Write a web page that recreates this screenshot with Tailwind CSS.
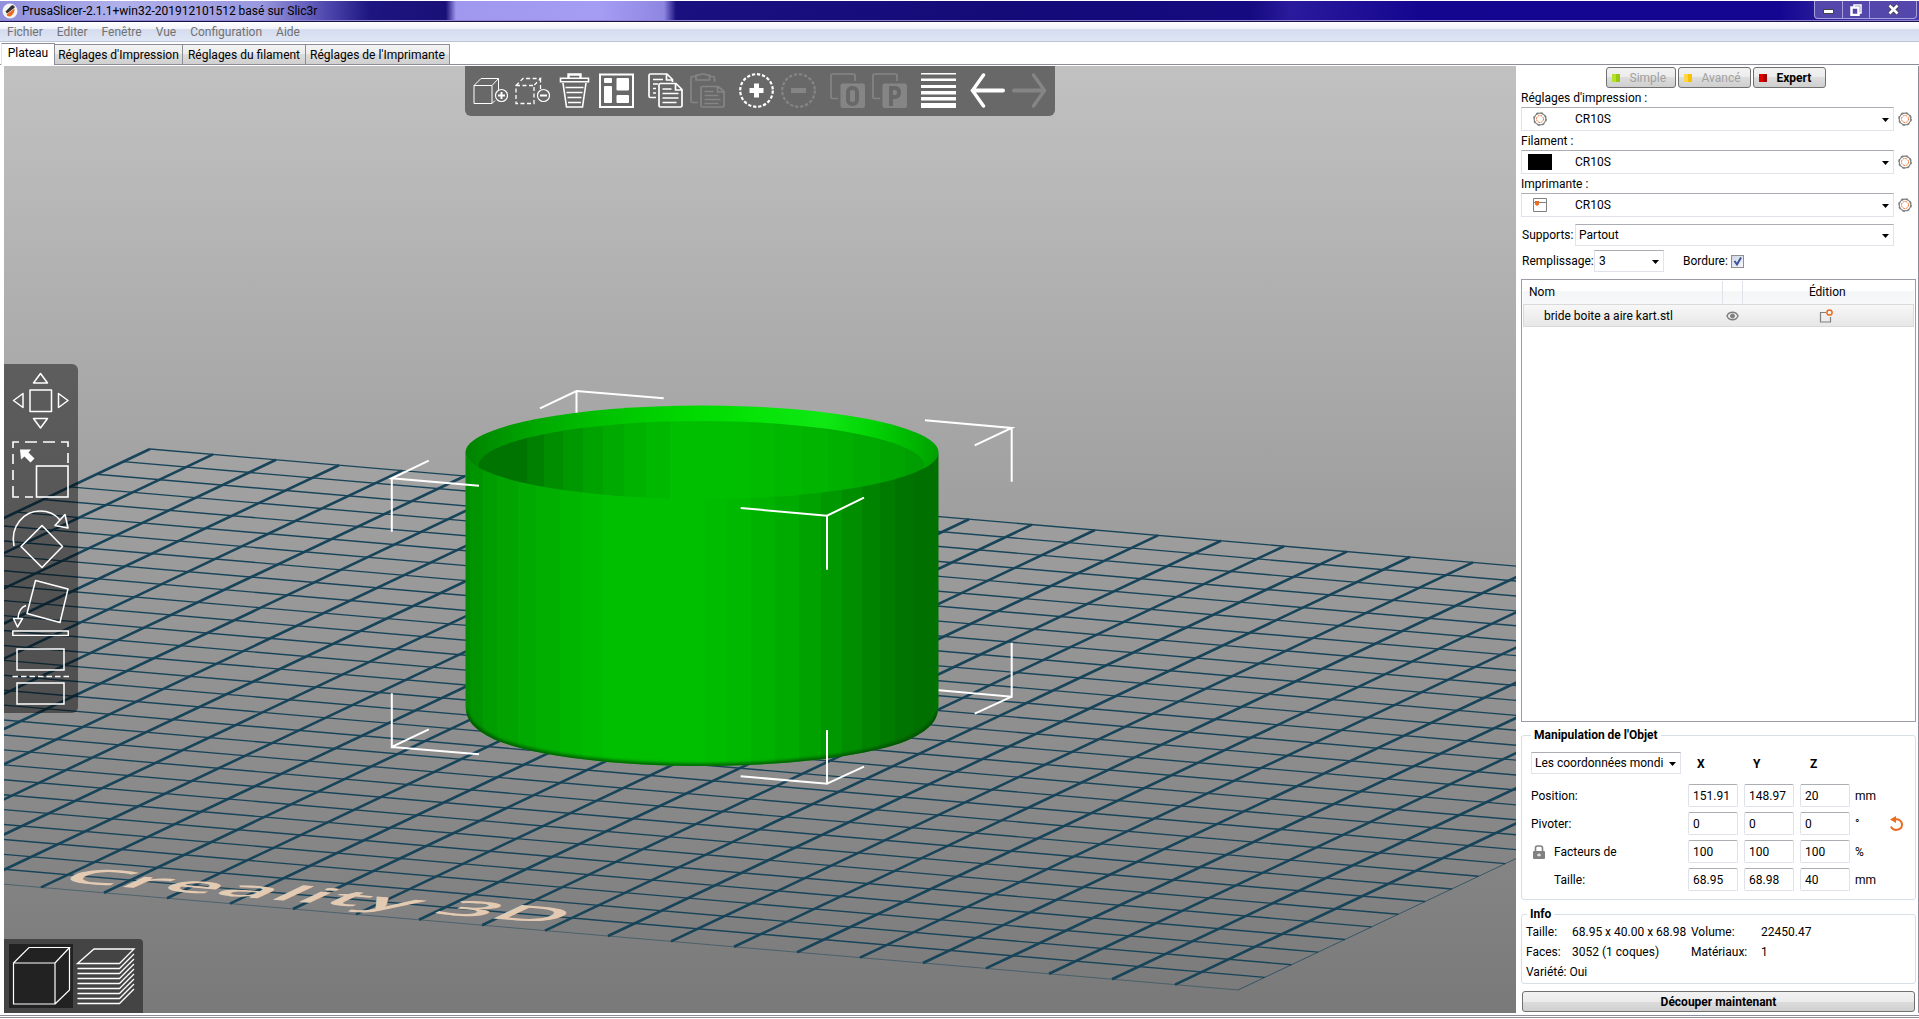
<!DOCTYPE html>
<html lang="fr">
<head>
<meta charset="utf-8">
<title>PrusaSlicer</title>
<script src="https://cdn.jsdelivr.net/npm/@tailwindcss/browser@4"></script>
</head>
<body class="flex min-h-screen flex-col bg-white font-['Roboto','Noto_Sans',sans-serif] text-[12px] leading-4 text-black">

<!-- Title bar -->
<header class="mt-px flex h-[21px] items-stretch border-b border-[#1a1048] inset-shadow-[0_-1px_#8c84d0] bg-[linear-gradient(90deg,#8f8fdc_0px,#b0b0ea_120px,#9a98de_260px,#4a44ab_330px,#1d1580_370px,#1a1078_446px,#a098ee_456px,#a59df4_600px,#8e86e0_664px,#1a1080_676px,#140a78_1000px,#150a80_1250px,#2a1a9c_1290px,#150690_1420px,#140690_1780px,#4a3cae_1880px)]">
  <div class="flex flex-1 items-center gap-1 pl-[2px]">
    <svg class="size-4" viewBox="0 0 16 16"><circle cx="8" cy="8" r="7.500" fill="#f4f4f4"/><path d="M3.500 8.500 9.500 2.500c1.500-.5 3 .5 3.300 2L5 10.500z" fill="#333"/><path d="m4.500 11.500 8-6c.5 3-2 7.500-5 8-1.500 0-2.600-.8-3-2z" fill="#ed6b21"/></svg>
    <h1 class="text-[12px]">PrusaSlicer-2.1.1+win32-201912101512 basé sur Slic3r</h1>
  </div>
  <div class="mr-[2px] flex h-[18px] overflow-hidden rounded-b border border-t-0 border-[#a8a0dd] bg-[#5347ac]">
    <button class="flex w-[28px] items-center justify-center border-r border-[#a8a0dd]" aria-label="Réduire"><svg class="mt-1 h-[5px] w-[11px]"><rect x=".5" y=".5" width="10" height="4" fill="#fff" stroke="#444"/></svg></button>
    <button class="flex w-[27px] items-center justify-center border-r border-[#a8a0dd]" aria-label="Restaurer"><svg class="size-3" viewBox="0 0 12 12" fill="none" stroke="#fff" stroke-width="1.500"><path d="M4 3V1h7v8H9"/><path d="M1.500 3.500h7v7.500h-7z" stroke-width="2.500"/></svg></button>
    <button class="flex w-[46px] items-center justify-center" aria-label="Fermer"><svg class="size-[11px]" viewBox="0 0 11 11"><path d="m1.500 1.500 8 8m0-8-8 8" stroke="#444" stroke-width="4"/><path d="m1.500 1.500 8 8m0-8-8 8" stroke="#fff" stroke-width="2.500"/></svg></button>
  </div>
</header>

<!-- Menu bar -->
<nav class="flex h-5 items-center gap-[14px] border-b border-[#bfc5d2] bg-[linear-gradient(#fff,#f0f3f9_35%,#d5dcee_40%,#dfe6f5)] pl-[7px] text-[#727272]">
  <a href="#">Fichier</a><a href="#">Editer</a><a href="#">Fenêtre</a><a href="#">Vue</a><a href="#">Configuration</a><a href="#">Aide</a>
</nav>

<!-- Tabs -->
<div class="flex h-[23px] items-end border-b border-[#8b8e98] pl-px">
  <button class="-mb-px h-[22px] w-[54px] border border-b-0 border-[#8b8e98] border-l-[#e4e4e8] bg-white pb-1">Plateau</button>
  <button class="h-[20px] w-[128px] border-t border-r border-[#8b8e98] bg-[linear-gradient(#f3f3f3,#ebebeb_50%,#dcdcdc_50%,#d0d0d0)]">Réglages d'Impression</button>
  <button class="h-[20px] w-[123px] border-t border-r border-[#8b8e98] bg-[linear-gradient(#f3f3f3,#ebebeb_50%,#dcdcdc_50%,#d0d0d0)]">Réglages du filament</button>
  <button class="h-[20px] w-[144px] border-t border-r border-[#8b8e98] bg-[linear-gradient(#f3f3f3,#ebebeb_50%,#dcdcdc_50%,#d0d0d0)]">Réglages de l'Imprimante</button>
</div>

<main class="flex flex-1 border-b border-[#8b8e98] pt-px pb-[2px] pl-1">

  <!-- 3D view -->
  <section class="relative min-w-0 flex-1 overflow-hidden bg-[linear-gradient(#c1c1c1,#797979)]">
    <svg class="absolute inset-0 size-full" aria-hidden="true">
      <defs>
        <linearGradient id="wall" gradientUnits="userSpaceOnUse" x1="465" x2="938" y1="0" y2="0"></linearGradient>
        <linearGradient id="inner" gradientUnits="userSpaceOnUse" x1="465" x2="938" y1="0" y2="0"></linearGradient>
        <linearGradient id="rim" gradientUnits="userSpaceOnUse" x1="465" x2="938" y1="0" y2="0">
          <stop offset="0" stop-color="#008200"/><stop offset=".06" stop-color="#009200"/><stop offset=".15" stop-color="#00a800"/><stop offset=".28" stop-color="#00c000"/><stop offset=".48" stop-color="#00da00"/><stop offset=".62" stop-color="#06e408"/><stop offset=".76" stop-color="#10e814"/><stop offset=".86" stop-color="#02d404"/><stop offset=".95" stop-color="#00b400"/><stop offset="1" stop-color="#00a000"/>
        </linearGradient>
        <clipPath id="mouth"><ellipse cx="702" cy="452.500" rx="236.500" ry="47"/></clipPath>
        <clipPath id="bodyClip"><path d="M465.500 452V706C466 722 476 731 498 741C540 757 620 766 702 766C784 766 864 757 906 741C928 731 938 722 938.500 706V452A236.500 47 0 0 1 465.500 452Z"/></clipPath>
        <filter id="soft" x="-5%" y="-20%" width="110%" height="140%"><feGaussianBlur stdDeviation="1.500"/></filter>
      </defs>
      <g transform="translate(-4 -66)">
        <g id="bed" fill="none" stroke="#174459"></g>
        <text transform="matrix(6.300 .54 -2.670 1.263 55 881)" font-size="15" font-weight="600" font-family="Open Sans, Noto Sans, sans-serif" fill="#e2cab3">Creality 3D</text>
        <path d="M576.500 391V414M540 408.300 576.500 391 663.700 398.300M1011.700 642.700V696.700L925 689M1011.700 696.700 974.700 713.700" fill="none" stroke="#fff" stroke-width="2"/>
        <ellipse cx="702" cy="452.500" rx="236.500" ry="47" fill="url(#rim)"/>
        <g clip-path="url(#mouth)"><ellipse cx="701.500" cy="466" rx="223" ry="45" fill="url(#inner)"/></g>
        <path d="M465.500 452V706C466 722 476 731 498 741C540 757 620 766 702 766C784 766 864 757 906 741C928 731 938 722 938.500 706V452A236.500 47 0 0 1 465.500 452Z" fill="url(#wall)"/>
        <g clip-path="url(#bodyClip)"><path d="M463 712C466 723 476 733 498 743C540 759 620 768 702 768C784 768 864 759 906 743C928 733 938 723 941 712" fill="none" stroke="#004a00" stroke-width="9" filter="url(#soft)" opacity=".75"/></g>
        <path d="M925 420.300 1011.700 428 974.700 445.300M1011.700 428V481.700M428.800 460.700 391.800 478.300 479 485.700M391.800 478.300V531.700M740.700 508 827 515.700 864 497.700M827 515.700V569.700M391.800 693.300V747L428.800 729.300M391.800 747 479 754.300M827 730V783.700L740.700 776.300M827 783.700 864 766.700" fill="none" stroke="#fff" stroke-width="2"/>
      </g>
    </svg>

    <!-- Top toolbar -->
    <div class="absolute top-0 left-[461px] flex h-[50px] gap-[14px] rounded-b-md bg-[#686868] px-2 pt-[7px]" role="toolbar">
      <div class="flex gap-[7px]">
        <button class="size-[35px]" aria-label="Ajouter"><svg viewBox="0 0 35 35" fill="none" stroke="#fff" stroke-linejoin="round"><path d="M1 12.500h18v18H1zM1 12.500l7-7h17.500l-6.500 7M25.500 5.500V17M19 30.500l3-3"/><circle cx="28.500" cy="22.500" r="6" stroke-width="1.200"/><path d="M28.500 19v7M25 22.500h7" stroke-width="2"/></svg></button>
        <button class="size-[35px]" aria-label="Supprimer"><svg viewBox="0 0 35 35" fill="none" stroke="#fff"><path d="M1 12.500h18v18H1zM1 12.500l7-7h17.500l-6.500 7M25.500 5.500V17" stroke-dasharray="4 2.500" stroke-width="1.300"/><circle cx="28.500" cy="22.500" r="6" fill="#686868" stroke-width="1.200"/><path d="M25 22.500h7" stroke-width="2"/></svg></button>
        <button class="size-[35px]" aria-label="Tout supprimer"><svg viewBox="0 0 35 35" fill="none" stroke="#fff" stroke-width="1.600"><path d="M11.500 5V1.500h12V5" stroke-width="2.400"/><path d="M3.500 5.200h28v3.600h-28z"/><path d="M6 10l3.500 24h16L29 10M8.500 14.500h18M9.500 19.500h16M10.500 24.500h14M11 29.500h13"/></svg></button>
        <button class="size-[35px]" aria-label="Agencer"><svg viewBox="0 0 35 35"><path d="M1 1.500h33v32.500H1z" fill="none" stroke="#fff" stroke-width="2"/><g fill="#fff"><rect x="5" y="5" width="8" height="5" rx="1"/><rect x="17.500" y="5" width="12.500" height="12.500" rx="1"/><rect x="5" y="13" width="8" height="17" rx="1"/><rect x="17.500" y="22" width="12.500" height="8" rx="1"/></g></svg></button>
      </div>
      <div class="flex gap-[7px]">
        <button class="size-[35px]" aria-label="Copier"><svg viewBox="0 0 35 35" fill="none" stroke="#fff" stroke-width="1.700" stroke-linejoin="round"><path d="M8 24.500H2.500q-1.500 0-1.500-1.500V2.500Q1 1 2.500 1H19l5.500 5.500V9M18.500 1v6h6M5 6.500h10M5 11h5M5 15.500h3M5 20h3"/><path d="M11 12q0-1.500 1.500-1.500H28l6 6V32.500q0 1.500-1.500 1.500h-20q-1.500 0-1.500-1.500zM27.500 10.500v6.500H34M14.500 16h9M14.500 20.500h16M14.500 25h16M14.500 29.500h14"/></svg></button>
        <button class="size-[35px]" aria-label="Coller" disabled><svg viewBox="0 0 35 35" fill="none" stroke="#858585" stroke-width="1.700" stroke-linejoin="round"><path d="M8 29.500H2.500Q1 29.500 1 28V5q0-1.500 1.500-1.500H6M19 3.500h4q1.500 0 1.500 1.500v4M6 2h4l1-1h4l1 1h3.500v5H6z"/><path d="M11 15q0-1.500 1.500-1.500H28l6 5V32.500q0 1.500-1.500 1.500h-20q-1.500 0-1.500-1.500zM27.500 13.500v5.500H34M14.500 18.500h9M14.500 22.500h14M14.500 26.500h16M14.500 30.500h14"/></svg></button>
      </div>
      <div class="flex gap-[7px]">
        <button class="size-[35px]" aria-label="Ajouter une instance"><svg viewBox="0 0 35 35" fill="none" stroke="#fff"><circle cx="17.500" cy="17.500" r="16.300" stroke-width="2.200" stroke-dasharray="3.300 1.820" stroke-linecap="butt"/><path d="M17.500 10.500v14M10.500 17.500h14" stroke-width="5" /></svg></button>
        <button class="size-[35px]" aria-label="Supprimer une instance" disabled><svg viewBox="0 0 35 35" fill="none" stroke="#858585"><circle cx="17.500" cy="17.500" r="16.300" stroke-width="2.200" stroke-dasharray="3.300 1.820"/><path d="M10 17.500h15" stroke-width="5"/></svg></button>
      </div>
      <div class="flex gap-[7px]">
        <button class="size-[35px]" aria-label="Scinder en objets" disabled><svg viewBox="0 0 35 35"><path d="M8 25.500H2.500Q1 25.500 1 24V2.500Q1 1 2.500 1h21Q25 1 25 2.500V8" fill="none" stroke="#858585" stroke-width="1.700"/><rect x="10.500" y="10.500" width="24.500" height="24.500" rx="2" fill="#858585"/><rect x="18" y="15" width="9" height="16" rx="4" fill="none" stroke="#686868" stroke-width="4"/></svg></button>
        <button class="size-[35px]" aria-label="Scinder en pièces" disabled><svg viewBox="0 0 35 35"><path d="M8 25.500H2.500Q1 25.500 1 24V2.500Q1 1 2.500 1h21Q25 1 25 2.500V8" fill="none" stroke="#858585" stroke-width="1.700"/><rect x="10.500" y="10.500" width="24.500" height="24.500" rx="2" fill="#858585"/><path d="M19 33V15h4q4 0 4 4.500T23 24h-3" fill="none" stroke="#686868" stroke-width="4"/></svg></button>
      </div>
      <button class="size-[35px]" aria-label="Hauteur de couche variable"><svg viewBox="0 0 35 35"><g fill="#fff"><path d="M0 0h35v1.500H0zM0 5.500h35V8H0zM0 12h35v3H0zM0 18h35v3.500H0zM0 24h35v3.500H0zM0 30h35v5H0z"/></g></svg></button>
      <div class="flex gap-[7px]">
        <button class="size-[35px]" aria-label="Annuler"><svg viewBox="0 0 35 35" fill="none" stroke="#fff" stroke-width="4" stroke-linecap="round"><path d="M33 17.500H3"/><path d="M13.500 2 2.500 17.500l11 15.500" stroke-width="3.400"/></svg></button>
        <button class="size-[35px]" aria-label="Rétablir" disabled><svg viewBox="0 0 35 35" fill="none" stroke="#858585" stroke-width="4" stroke-linecap="round"><path d="M2 17.500h30"/><path d="M21.500 2l11 15.500-11 15.500" stroke-width="3.400"/></svg></button>
      </div>
    </div>

    <!-- Gizmo toolbar -->
    <div class="absolute top-[298px] left-0 flex w-[74px] flex-col items-center gap-3 rounded-r-md bg-black/45 py-2 pr-px" role="toolbar">
      <button class="size-[57px]" aria-label="Déplacer"><svg viewBox="0 0 57 57" fill="none" stroke="#fff" stroke-width="1.500" stroke-linejoin="round"><rect x="18" y="18" width="21.500" height="21.500"/><path d="M28.500 1.500 35.500 11h-14zM28.500 56l7-9.500h-14zM1.500 28.500 11 21.500v14zM56 28.500l-9.500-7v14z"/></svg></button>
      <button class="size-[57px]" aria-label="Redimensionner"><svg viewBox="0 0 57 57" fill="none" stroke="#fff" stroke-width="1.600"><path d="M1 7V1h6M13 1h12M31 1h12M49 1h7v5M56 12v10M1 13v10M1 29v10M1 45v11h6M13 56h8"/><rect x="24.500" y="25" width="31.500" height="31"/><path d="M8 8.500h11l-2.500 3 6 6-4 4-6-6-3.500 3z" fill="#fff" stroke="none"/></svg></button>
      <button class="size-[57px]" aria-label="Tourner"><svg class="overflow-visible" viewBox="0 0 57 57" fill="none" stroke="#fff" stroke-width="1.600" stroke-linejoin="round"><path d="M30 15.500 50.500 36.500 30 57.500 9 36.500z"/><path d="M2 36C-2 16 12 1 28 1c9 0 16 4 20 9M43 15.500 53 4.500 56 18z"/></svg></button>
      <button class="size-[57px]" aria-label="Poser sur une face"><svg viewBox="0 0 57 57" fill="none" stroke="#fff" stroke-width="1.500" stroke-linejoin="round"><path d="M23.500 1.500 56 10l-8 33.500-33-9zM14 26.500C9 28 6.500 33 6 39M1.500 39.500h9L5.500 48zM.800 52h55.500v4.500H.800z"/></svg></button>
      <button class="size-[57px]" aria-label="Couper"><svg viewBox="0 0 57 57" fill="none" stroke="#fff" stroke-width="1.500"><path d="M5 1h47v21H5zM5 35h47v21H5z"/><path d="M.500 28.500H57" stroke-dasharray="5.500 3"/></svg></button>
    </div>

    <!-- View switcher -->
    <div class="absolute bottom-0 left-0 flex rounded-tr bg-[#444] p-[5px] pr-[2px]">
      <button class="size-16 bg-[#222]" aria-label="Vue 3D"><svg viewBox="0 0 64 64" fill="none" stroke="#fff" stroke-width="1.200"><path d="M4.500 19H46v41H4.500zM4.500 19 20 3.500h40.500L46 19M60.500 3.500V46L46 60"/></svg></button>
      <button class="h-16 w-[68px]" aria-label="Aperçu"><svg viewBox="0 0 68 64" fill="none" stroke="#fff" stroke-width="1.300"><path d="M4.500 19.500 21 5h40L46.500 19.500z"/><path d="M4.500 24.500h42L61 10M4.500 29.500h42L61 15M4.500 34.500h42L61 20M4.500 39.500h42L61 25M4.500 44.500h42L61 30M4.500 49.500h42L61 35M4.500 54.500h42L61 40M4.500 59.500h42L61 45"/></svg></button>
    </div>
  </section>

  <!-- Settings panel -->
  <aside class="flex w-[403px] shrink-0 flex-col border-r border-[#8b8e98] pt-px pr-[2px] pb-px pl-[5px]">
    <div class="flex justify-center gap-[2px] pr-[6px]">
      <button class="flex h-[21px] w-[70px] items-center gap-[10px] rounded-[3px] border border-[#707070] bg-[linear-gradient(#f2f2f2,#ebebeb_50%,#dddddd_50%,#cfcfcf)] pl-[5px] text-[#a0a0a0]"><span class="h-2 w-2 bg-[linear-gradient(90deg,#b4e22c_50%,#98c80f_50%)]"></span>Simple</button>
      <button class="flex h-[21px] w-[73px] items-center gap-[10px] rounded-[3px] border border-[#707070] bg-[linear-gradient(#f2f2f2,#ebebeb_50%,#dddddd_50%,#cfcfcf)] pl-[5px] text-[#a0a0a0]"><span class="h-2 w-2 bg-[linear-gradient(90deg,#ffd84a_50%,#fcc000_50%)]"></span>Avancé</button>
      <button class="flex h-[21px] w-[73px] items-center gap-[10px] rounded-[3px] border border-[#707070] bg-[linear-gradient(#f2f2f2,#ebebeb_50%,#dddddd_50%,#cfcfcf)] pl-[5px] font-bold"><span class="h-2 w-2 bg-[linear-gradient(90deg,#e00000_50%,#a80000_50%)]"></span>Expert</button>
    </div>

    <label for="print" class="h-[19px] pt-[2px]">Réglages d'impression :</label>
    <div class="flex items-center gap-1">
      <div class="relative w-[373px]">
        <select id="print" class="block h-6 w-full appearance-none border border-[#e2e3ea] border-t-[#abadb3] bg-white pl-[53px]"><option>CR10S</option></select>
        <svg class="pointer-events-none absolute top-[5px] left-3 size-[14px]" viewBox="0 0 14 14" fill="none"><circle cx="7" cy="7" r="5.800" stroke="#808080" stroke-width="1.200"/><circle cx="7" cy="7" r="6.200" stroke="#808080" stroke-width="1.400" stroke-dasharray="2.400 2.470"/><circle cx="7" cy="7" r="3.500" stroke="#ed6b21" stroke-width="1" stroke-dasharray="1.800 .950"/></svg>
        <svg class="pointer-events-none absolute top-[11px] right-[5px] h-1 w-[7px]"><path d="M0 0h7L3.500 4z"/></svg>
      </div>
      <button aria-label="Éditer le préréglage"><svg class="size-[14px]" viewBox="0 0 14 14" fill="none"><circle cx="7" cy="7" r="5.800" stroke="#808080" stroke-width="1.200"/><circle cx="7" cy="7" r="6.200" stroke="#808080" stroke-width="1.400" stroke-dasharray="2.400 2.470"/><circle cx="7" cy="7" r="3.500" stroke="#ed6b21" stroke-width="1" stroke-dasharray="1.800 .950"/></svg></button>
    </div>

    <label for="filament" class="h-[19px] pt-[2px]">Filament :</label>
    <div class="flex items-center gap-1">
      <div class="relative w-[373px]">
        <select id="filament" class="block h-6 w-full appearance-none border border-[#e2e3ea] border-t-[#abadb3] bg-white pl-[53px]"><option>CR10S</option></select>
        <span class="pointer-events-none absolute top-1 left-[7px] h-4 w-6 bg-black"></span>
        <svg class="pointer-events-none absolute top-[11px] right-[5px] h-1 w-[7px]"><path d="M0 0h7L3.500 4z"/></svg>
      </div>
      <button aria-label="Éditer le préréglage"><svg class="size-[14px]" viewBox="0 0 14 14" fill="none"><circle cx="7" cy="7" r="5.800" stroke="#808080" stroke-width="1.200"/><circle cx="7" cy="7" r="6.200" stroke="#808080" stroke-width="1.400" stroke-dasharray="2.400 2.470"/><circle cx="7" cy="7" r="3.500" stroke="#ed6b21" stroke-width="1" stroke-dasharray="1.800 .950"/></svg></button>
    </div>

    <label for="printer" class="h-[19px] pt-[2px]">Imprimante :</label>
    <div class="flex items-center gap-1">
      <div class="relative w-[373px]">
        <select id="printer" class="block h-6 w-full appearance-none border border-[#e2e3ea] border-t-[#abadb3] bg-white pl-[53px]"><option>CR10S</option></select>
        <svg class="pointer-events-none absolute top-[5px] left-3 size-[14px]" viewBox="0 0 14 14"><path d="M.500.500h13v13H.500zM1 4.500h12" fill="none" stroke="#808080"/><path d="M2 3h4v3.500L4 8 2 6.500z" fill="#ed6b21"/></svg>
        <svg class="pointer-events-none absolute top-[11px] right-[5px] h-1 w-[7px]"><path d="M0 0h7L3.500 4z"/></svg>
      </div>
      <button aria-label="Éditer le préréglage"><svg class="size-[14px]" viewBox="0 0 14 14" fill="none"><circle cx="7" cy="7" r="5.800" stroke="#808080" stroke-width="1.200"/><circle cx="7" cy="7" r="6.200" stroke="#808080" stroke-width="1.400" stroke-dasharray="2.400 2.470"/><circle cx="7" cy="7" r="3.500" stroke="#ed6b21" stroke-width="1" stroke-dasharray="1.800 .950"/></svg></button>
    </div>

    <div class="mt-[7px] flex w-[373px] items-center pl-px">
      <label for="supports" class="w-[53px] shrink-0">Supports:</label>
      <div class="relative flex-1">
        <select id="supports" class="block h-[22px] w-full appearance-none border border-[#e2e3ea] border-t-[#abadb3] bg-white pl-[3px]"><option>Partout</option></select>
        <svg class="pointer-events-none absolute top-[10px] right-[5px] h-1 w-[7px]"><path d="M0 0h7L3.500 4z"/></svg>
      </div>
    </div>

    <div class="mt-1 flex items-center pl-px">
      <label for="infill" class="w-[72px] shrink-0">Remplissage:</label>
      <div class="relative w-[70px]">
        <select id="infill" class="block h-[22px] w-full appearance-none border border-[#e2e3ea] border-t-[#abadb3] bg-white pl-1"><option>3</option></select>
        <svg class="pointer-events-none absolute top-[10px] right-[5px] h-1 w-[7px]"><path d="M0 0h7L3.500 4z"/></svg>
      </div>
      <label for="brim" class="ml-[19px] w-[48px] shrink-0">Bordure:</label>
      <span class="relative size-[13px]">
        <input id="brim" type="checkbox" checked class="block size-[13px] appearance-none border border-[#8e8f8f] bg-[linear-gradient(135deg,#cfd6e2,#f6f8fb)]">
        <svg class="pointer-events-none absolute inset-0 size-[13px]" viewBox="0 0 13 13"><path d="M3.500 6 6 9.500l4-7" fill="none" stroke="#3a539b" stroke-width="2"/></svg>
      </span>
    </div>

    <!-- Object list -->
    <div class="mt-[7px] flex-1 border border-[#9a9da5] p-px">
      <table class="w-full table-fixed border-collapse">
        <colgroup><col class="w-[199px]"><col class="w-[20px]"><col></colgroup>
        <thead>
          <tr class="h-[23px] bg-[linear-gradient(#fff_45%,#f5f6f8_45%,#f7f8fa)]">
            <th class="border-r border-b border-[#dfe2e8] pl-[6px] text-left font-normal">Nom</th>
            <th class="border-r border-b border-[#dfe2e8]"></th>
            <th class="border-b border-[#dfe2e8] pr-[2px] text-center font-normal">Édition</th>
          </tr>
        </thead>
        <tbody>
          <tr class="h-[23px] bg-[linear-gradient(#f8f8f8,#e6e6e6)] outline -outline-offset-1 outline-[#dadada]">
            <td class="pl-[21px]">bride boite a aire kart.stl</td>
            <td><svg class="mx-auto h-[10px] w-[13px]" viewBox="0 0 13 10" fill="none" stroke="#808080"><path d="M1 5c2-5 9-5 11 0-2 5-9 5-11 0z" stroke-width="1.500"/><circle cx="6.500" cy="5" r="2" fill="#808080"/></svg></td>
            <td class="pr-[4px]"><svg class="mx-auto size-[14px]" viewBox="0 0 14 14" fill="none"><path d="M7 3.500H1.500V13h10V8" stroke="#808080" stroke-width="1.200"/><circle cx="10.500" cy="3.500" r="2.600" stroke="#ed6b21" stroke-width="1.500"/></svg></td>
          </tr>
        </tbody>
      </table>
    </div>

    <!-- Object manipulation -->
    <fieldset class="mt-[5px] rounded-[3px] border border-[#d5dfe5] pb-2 pl-[9px]">
      <legend class="px-[3px] font-bold">Manipulation de l'Objet</legend>
      <div class="grid grid-cols-[157px_56px_56px_55px_1fr_25px] items-center gap-y-[5px] pt-[9px]">
        <div class="relative mb-[5px] w-[150px]">
          <select aria-label="Système de coordonnées" class="block h-[22px] w-full appearance-none border border-[#e2e3ea] border-t-[#abadb3] bg-white pr-[17px] pl-[3px]"><option>Les coordonnées mondiales</option></select>
          <svg class="pointer-events-none absolute top-[10px] right-[5px] h-1 w-[7px]"><path d="M0 0h7L3.500 4z"/></svg>
        </div>
        <b class="pb-1 pl-[9px]">X</b><b class="pb-1 pl-[9px]">Y</b><b class="pb-1 pl-[10px]">Z</b><span></span><span></span>

        <span>Position:</span>
        <input aria-label="Position X" value="151.91" class="h-[23px] w-[50px] rounded-[2px] border border-[#dfe2ea] border-t-[#abadb3] pl-1">
        <input aria-label="Position Y" value="148.97" class="h-[23px] w-[50px] rounded-[2px] border border-[#dfe2ea] border-t-[#abadb3] pl-1">
        <input aria-label="Position Z" value="20" class="h-[23px] w-[50px] rounded-[2px] border border-[#dfe2ea] border-t-[#abadb3] pl-1">
        <span>mm</span><span></span>

        <span>Pivoter:</span>
        <input aria-label="Pivoter X" value="0" class="h-[23px] w-[50px] rounded-[2px] border border-[#dfe2ea] border-t-[#abadb3] pl-1">
        <input aria-label="Pivoter Y" value="0" class="h-[23px] w-[50px] rounded-[2px] border border-[#dfe2ea] border-t-[#abadb3] pl-1">
        <input aria-label="Pivoter Z" value="0" class="h-[23px] w-[50px] rounded-[2px] border border-[#dfe2ea] border-t-[#abadb3] pl-1">
        <span>°</span>
        <button aria-label="Réinitialiser la rotation"><svg class="h-[15px] w-[13px]" viewBox="0 0 13 15" fill="none"><path d="M5 3.500c4-.8 7 2 7 5 0 6-9 7.500-11 2" stroke="#ed6b21" stroke-width="2"/><path d="M0 3.500 6 0v7z" fill="#ed6b21"/></svg></button>

        <span class="flex items-center gap-[9px] pl-[2px]"><svg class="h-[14px] w-3" viewBox="0 0 12 14"><path d="M2.500 7V3q0-2 2-2h3q2 0 2 2v4" fill="none" stroke="#808080" stroke-width="1.600"/><rect y="6" width="12" height="8" rx="1" fill="#808080"/><path d="M4 10h4M6 8.500v3" stroke="#fff"/></svg>Facteurs de</span>
        <input aria-label="Facteur X" value="100" class="h-[23px] w-[50px] rounded-[2px] border border-[#dfe2ea] border-t-[#abadb3] pl-1">
        <input aria-label="Facteur Y" value="100" class="h-[23px] w-[50px] rounded-[2px] border border-[#dfe2ea] border-t-[#abadb3] pl-1">
        <input aria-label="Facteur Z" value="100" class="h-[23px] w-[50px] rounded-[2px] border border-[#dfe2ea] border-t-[#abadb3] pl-1">
        <span>%</span><span></span>

        <span class="pl-[23px]">Taille:</span>
        <input aria-label="Taille X" value="68.95" class="h-[23px] w-[50px] rounded-[2px] border border-[#dfe2ea] border-t-[#abadb3] pl-1">
        <input aria-label="Taille Y" value="68.98" class="h-[23px] w-[50px] rounded-[2px] border border-[#dfe2ea] border-t-[#abadb3] pl-1">
        <input aria-label="Taille Z" value="40" class="h-[23px] w-[50px] rounded-[2px] border border-[#dfe2ea] border-t-[#abadb3] pl-1">
        <span>mm</span><span></span>
      </div>
    </fieldset>

    <!-- Info -->
    <fieldset class="mt-[6px] rounded-[3px] border border-[#d5dfe5] pb-px pl-1">
      <legend class="ml-px px-[3px] font-bold">Info</legend>
      <dl class="grid grid-cols-[46px_119px_70px_1fr] leading-5">
        <dt>Taille:</dt><dd>68.95 x 40.00 x 68.98</dd><dt>Volume:</dt><dd>22450.47</dd>
        <dt>Faces:</dt><dd>3052 (1 coques)</dd><dt>Matériaux:</dt><dd>1</dd>
        <dt class="col-span-4">Variété: Oui</dt>
      </dl>
    </fieldset>

    <button class="mx-px mt-[7px] h-[21px] rounded-[3px] border border-[#707070] bg-[linear-gradient(#f2f2f2,#ebebeb_50%,#dddddd_50%,#cfcfcf)] font-bold">Découper maintenant</button>
  </aside>
</main>
<footer class="mb-px h-[2px] border-b border-[#8b8e98]"></footer>

<script>
  const NS = 'http://www.w3.org/2000/svg';

  // Print bed: 30 x 30 cells, spanned by two screen-space vectors from its back-left corner.
  const origin = [150, 449], across = [1890, 162], toward = [-802, 379], cells = 30;
  const bed = document.getElementById('bed');
  function bedLine(start, vec, width) {
    const p = document.createElementNS(NS, 'path');
    p.setAttribute('d', `M${start[0]} ${start[1]}l${vec[0]} ${vec[1]}`);
    p.setAttribute('stroke-width', width);
    bed.append(p);
  }
  for (let i = 0; i <= cells; i++) {
    const t = i / cells, edge = i === cells;
    bedLine([origin[0] + toward[0] * t, origin[1] + toward[1] * t], across, edge ? 0.5 : 1.4);
    bedLine([origin[0] + across[0] * t, origin[1] + across[1] * t], toward, edge ? 0.7 : 2.6);
  }

  // Flat-shaded facets: [start x, green level], each band running up to the next.
  function facets(id, bands) {
    const g = document.getElementById(id);
    bands.forEach(([x, level], i) => {
      const end = i + 1 < bands.length ? bands[i + 1][0] : 938;
      [x, end].forEach(v => {
        const s = document.createElementNS(NS, 'stop');
        s.setAttribute('offset', (v - 465) / 473);
        s.setAttribute('stop-color', `rgb(0 ${level} 0)`);
        g.append(s);
      });
    });
  }
  facets('wall', [[465, 140], [470, 148], [483, 157], [497, 163], [518, 170], [536, 175], [560, 181], [582, 186], [602, 190], [705, 188], [727, 184], [751, 178], [775, 171], [799, 162], [821, 152], [842, 142], [862, 132], [880, 123], [895, 116], [914, 113]]);
  facets('inner', [[465, 116], [527, 128], [544, 141], [563, 152], [583, 162], [603, 170], [624, 178], [646, 184], [670, 190], [750, 187], [775, 184], [802, 180], [828, 176], [853, 170], [880, 164], [905, 158]]);
</script>
</body>
</html>
